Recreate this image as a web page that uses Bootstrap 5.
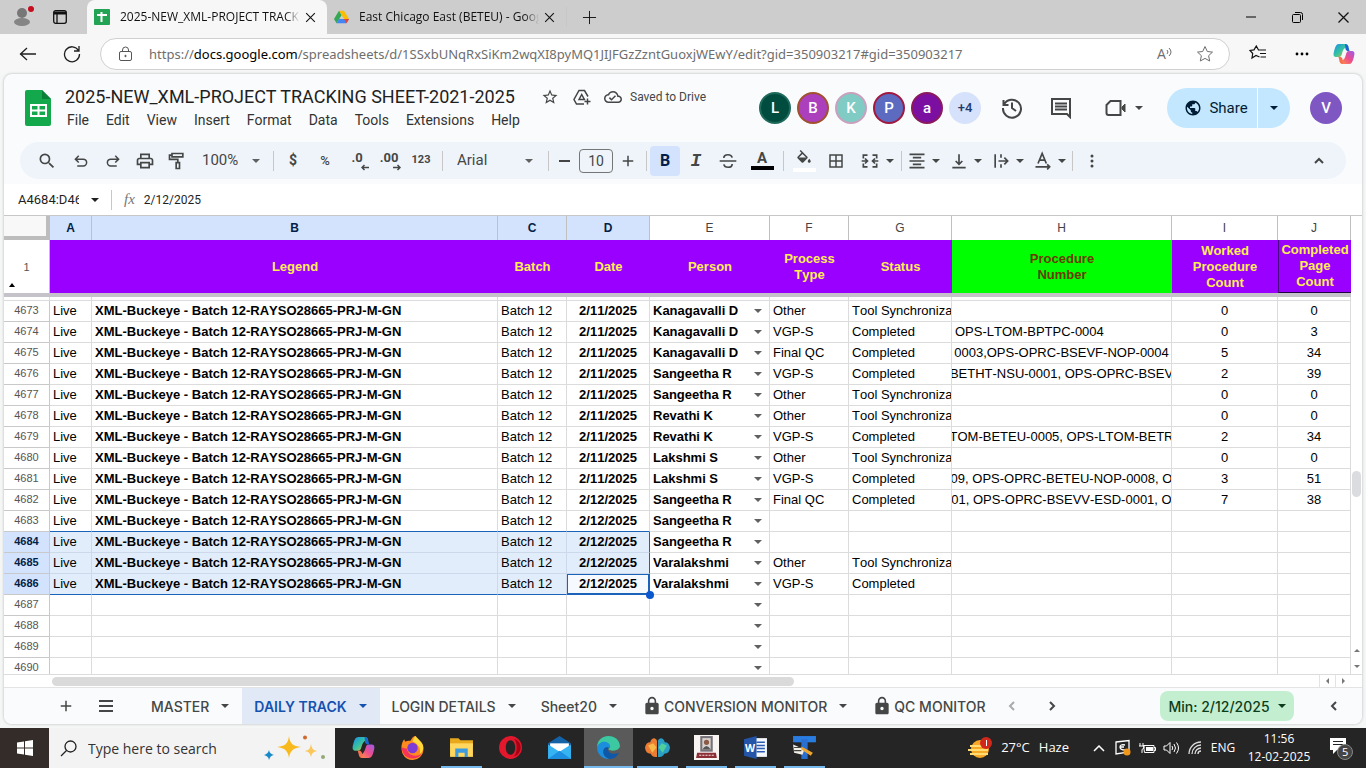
<!DOCTYPE html>
<html lang="en">
<head>
<meta charset="utf-8">
<meta name="viewport" content="width=device-width, initial-scale=1">
<title>2025-NEW_XML-PROJECT TRACKING SHEET-2021-2025</title>
<link href="https://cdn.jsdelivr.net/npm/bootstrap@5.3.0/dist/css/bootstrap.min.css" rel="stylesheet">
<style>
  :root { --ink: #444746; --sel: #d3e3fd; --blue: #1a63b8; --line: #dcdcdc; }
  body { font-family: Roboto, "Liberation Sans", sans-serif; background: #f5f6f6; color: #1f1f1f; }
  button, input, select { font-family: inherit; border: 0; background: transparent; padding: 0; color: inherit; }
  svg { display: block; flex: none; }
  .os-font { font-family: "Open Sans", "Noto Sans", sans-serif; }
  .ic { width: 20px; height: 20px; fill: currentColor; }
  .ic-18 { width: 18px; height: 18px; }
  .ic-line { fill: none; stroke: currentColor; stroke-width: 2; }
  .ic-thin { fill: none; stroke: currentColor; stroke-width: 1; }
  .ink { color: var(--ink); }
  .faint { color: #aaa; }
  .caret { width: 8px; height: 4px; fill: currentColor; }
  .tap { display: flex; align-items: center; justify-content: center; flex: none; }
  .w-30 { width: 30px; } .w-32 { width: 32px; } .w-38 { width: 38px; } .w-44 { width: 44px; } .w-46 { width: 46px; }

  /* browser tabs */
  .tabstrip { height: 34px; background: #cdcdcd; font-size: 12px; color: #111; }
  .edge-tab { width: 239px; padding: 0 10px 0 7px; gap: 10px; }
  .edge-tab.on { background: #f7f7f7; border-radius: 8px 8px 0 0; width: 240px; margin-left: 11px; }
  .edge-tab a { color: inherit; text-decoration: none; margin-right: -6px; -webkit-mask-image: linear-gradient(90deg, #000 92%, transparent); mask-image: linear-gradient(90deg, #000 92%, transparent); }
  .dot { width: 6px; height: 6px; background: #c50f1f; top: 6px; left: 28px; }

  /* address bar */
  .addr { height: 39px; background: #f7f7f7; }
  .omni { height: 32px; border: 1px solid #d0d0d0; border-radius: 16px; background: #fff; font-size: 14px; color: #6e6e6e; padding: 0 8px 0 17px; }
  .omni b { font-weight: 400; color: #000; }
  .url { font: 13px "Noto Sans", "Open Sans", sans-serif; }

  /* app frame */
  .frame { margin: 1px 4px 4px; background: #fafbfc; border-radius: 8px; box-shadow: 0 0 3px #b5b5b5; min-height: 0; }
  .frame > *, .tabstrip, .addr, .taskbar { flex-shrink: 0; }
  .apphead { height: 68px; padding: 0 20px 0 21px; }
  .logo { margin-right: 14px; }
  .doc-title { font-size: 18px; line-height: 24px; width: 457px; }
  .doc-title + button { margin-left: 12px; }
  .menu { gap: 17px; font-size: 14px; line-height: 22px; padding-left: 2px; }
  .menu a { color: #333; text-decoration: none; }
  .saved { font-size: 12px; color: var(--ink); margin-left: 6px; gap: 8px; }
  .who { width: 32px; height: 32px; border-radius: 50%; border: 2px solid transparent; color: #fff; font-size: 15px; font-weight: 500; display: flex; align-items: center; justify-content: center; flex: none; }
  .who-l { background: #004d40; border-color: #1f6a5c; }
  .who-b { background: #ab3fbc; border-color: #a0522d; }
  .who-k { background: #80cbc4; border-color: #c9a0bd; }
  .who-p { background: #5c6bc0; border-color: #a01840; }
  .who-a { background: #7b0fa2; border-color: #8a1a5a; }
  .who-more { background: #d6e2fb; border: 0; color: #1f3a6d; font-size: 13px; }
  .who-me { background: #7e57c2; border: 0; margin-left: 20px; }
  .people { gap: 6px; }
  .hist { width: 32px; margin-left: 15px; }
  .comm { width: 32px; margin-left: 17px; }
  .meet { gap: 9px; margin: 0 24px 0 28px; }
  .share { height: 40px; border-radius: 20px; background: #c2e7ff; color: #001d35; font-size: 15px; font-weight: 500; }
  .share button:first-child { width: 91px; gap: 7px; border-right: 1px solid #fff; }

  /* toolbar */
  .tools { height: 37px; margin: 0 16px 5px; padding: 0 11px; border-radius: 19px; background: #eff4fb; color: var(--ink); font-size: 14px; }
  .rule { width: 1px; height: 20px; background: #c7c7c7; flex: none; }
  .gap-l { margin-left: 2px; }
  .gap-m { margin-left: 3px; }
  .gap-x { margin-left: 5px; }
  .pick { appearance: none; -webkit-appearance: none; background: url("data:image/svg+xml,%3Csvg xmlns='http://www.w3.org/2000/svg' width='8' height='4'%3E%3Cpath d='M0 0h8L4 4z' fill='%23606060'/%3E%3C/svg%3E") no-repeat right 5px center; }
  .zoom-pick { width: 63px; margin: 0 8px 0 9px; font-size: 15px; }
  .font-pick { width: 81px; margin: 0 10px 0 14px; font-size: 15px; }
  .size-box { width: 34px; height: 24px; border: 1px solid #747775; border-radius: 4px; text-align: center; font-size: 14px; flex: none; }
  .bold-on { width: 30px; height: 30px; background: var(--sel); border-radius: 4px; color: #041e49; font-size: 16px; }
  .pct { font-size: 13px; font-weight: 500; }
  .dec { font-size: 13px; }
  .dec svg { align-self: flex-end; }
  .fmt123 { font-size: 11px; font-weight: 700; }
  .ital { font: italic bold 18px "Liberation Mono", monospace; }
  .tc { font-size: 15px; line-height: 15px; border-bottom: 4px solid #000; width: 23px; text-align: center; }
  .fc { border-bottom: 4px solid #fff; width: 23px; }
  .drop { width: 42px; gap: 5px; }
  .merge { width: 49px; gap: 6px; }

  /* formula bar */
  .fbar { height: 32px; background: #fff; border-bottom: 1px solid #c7c7c7; font-size: 13px; padding-left: 14px; }
  .name-box { width: 61px; }
  .cell-value { font-size: 12px; }
  .fx { font-family: "Liberation Serif", serif; font-style: italic; font-size: 15px; color: #777; }

  /* grid */
  .gridwrap { flex: 1 1 0; min-height: 0; background: #fff; overflow: hidden; }
  .sheet { table-layout: fixed; width: 100%; border-collapse: separate; border-spacing: 0; font: 13px/20px "Liberation Sans", sans-serif; font-kerning: none; color: #000; }
  .c-head { width: 46px; } .c-a { width: 42px; } .c-c { width: 69px; } .c-d { width: 83px; } .c-e { width: 120px; }
  .c-f { width: 79px; } .c-g { width: 103px; } .c-h { width: 220px; } .c-i { width: 106px; } .c-j { width: 73px; }
  .sheet th, .sheet td { padding: 0 3px; overflow: hidden; white-space: nowrap; border: 0 solid var(--line); border-width: 0 1px 1px 0; height: 21px; }
  .sheet .letters th { height: 24px; font-size: 12px; font-weight: 400; text-align: center; color: #444; border-color: #c0c0c0; border-bottom: 0; }
  .sheet .letters .on { background: var(--sel); color: #041e49; font-weight: 700; }
  .sheet .letters .corner { border: solid #bdbdbd; border-width: 0 4px 4px 0; background: #f8f8f8; }
  .sheet .rh { font-size: 11px; line-height: 18px; font-weight: 400; text-align: center; color: #555; border-color: #c9c9c9; vertical-align: top; }
  .sheet .rh.on { background: var(--sel); color: #041e49; font-weight: 700; }
  .sheet .frozen th { height: 53px; background: #9900ff; border: 0; color: #ffee50; font-weight: 700; line-height: 16px; text-align: center; vertical-align: middle; white-space: normal; padding: 0; }
  .sheet .frozen .rh { background: #fff; color: #555; font-weight: 400; border-right: 1px solid #c0c0c0; font-size: 11px; }
  .sheet .frozen .lime { background: #00ff00; color: #6b3a00; }
  .sheet .frozen .edge { border-left: 1px solid #4a0a80; border-bottom: 1px solid #200040; white-space: nowrap; }
  .pin { left: 5px; bottom: 6px; }
  .sheet .fbreak td { height: 4px; background: #c6c2c9; border: 0; line-height: 0; }
  .sheet .sliver td { height: 4px; line-height: 0; }
  .sheet .person { padding: 0; }
  .person select { display: block; width: 100%; height: 20px; font-weight: 700; padding-left: 3px; color: #000; background-position: right 7px center; }
  .sheet .in-sel { background: #e2edfb; border-color: #ccd9ea; }
  .sheet .s-above, .sheet .s-bottom { border-bottom-color: var(--blue); }
  .sheet .s-right { border-right-color: var(--blue); }
  .sheet .s-active { background: #f6faff; box-shadow: inset 0 0 0 1px var(--blue); border-color: var(--blue); overflow: visible; position: relative; }
  .handle { position: absolute; width: 8px; height: 8px; border-radius: 50%; background: #0b57d0; right: -5px; bottom: -5px; }
  .vbar { width: 11px; flex: none; background: #fff; color: #777; }
  .vbar .before { flex: 255; } .vbar .after { flex: 145; }
  .vbar .thumb { width: 9px; height: 26px; border-radius: 5px; background: #dadce0; }
  .vbar button { height: 16px; }
  .hbar { height: 14px; background: #fff; color: #777; border-top: 1px solid var(--line); border-bottom: 1px solid #e3e3e3; padding: 0 11px 0 48px; }
  .hbar .thumb { height: 9px; border-radius: 5px; background: #dadada; flex: 742; }
  .hbar .after { flex: 525; }
  .arrowbox { width: 16px; height: 12px; border-left: 1px solid #e3e3e3; }

  /* sheet tabs */
  .stabs { height: 36px; color: var(--ink); font: 500 14px Inter, Roboto, sans-serif; background: #f9fbfd; border-radius: 0 0 8px 8px; }
  .addsheet { margin-left: 40px; }
  .stabs-list { width: 850px; overflow: hidden; margin-left: 17px; flex: none; }
  .stab { height: 36px; padding: 0 13px 0 12px; display: flex; align-items: center; gap: 12px; color: inherit; white-space: nowrap; font-weight: 500; flex: none; }
  .stab.on { background: #e1e9f7; color: #1552b0; font-weight: 600; }
  .stab span { gap: 2px; }
  .min-pill { width: 134px; height: 30px; border-radius: 8px; background: #c4eed0; color: #0b3d1c; font-weight: 500; }
  .sidebtn { width: 68px; padding-left: 10px; }

  /* taskbar */
  .taskbar { height: 40px; background: #262526; color: #fff; font-size: 12px; padding-right: 3px; }
  .start { width: 49px; height: 40px; background: #342c29; }
  .tsearch { width: 286px; height: 40px; background: #f3f3f3; color: #333; padding: 0 8px 0 11px; gap: 11px; margin-right: 4px; }
  .tsearch input { font-size: 14px; color: #333; }
  .tsearch input::placeholder { color: #333; opacity: 1; }
  .app { width: 49px; height: 40px; border-bottom: 2px solid transparent; }
  .app.run { border-image: linear-gradient(90deg, transparent 10%, #76b9ed 10% 90%, transparent 90%) 1; }
  .app.act { background: #5a5a5a; border-bottom-color: #76b9ed; }
  .app svg { width: 25px; height: 25px; }
  .weather { font-size: 13px; gap: 9px; margin-right: 18px; }
  .tray { width: 24px; height: 40px; }
  .lang { width: 32px; }
  .clock { line-height: 18px; width: 80px; text-align: center; }
</style>
</head>
<body class="vh-100 d-flex flex-column overflow-hidden">

<svg width="0" height="0" class="position-absolute" aria-hidden="true">
  <symbol id="caret" viewBox="0 0 8 4"><path d="M0 0h8L4 4z"/></symbol>
  <symbol id="x" viewBox="0 0 12 12"><path d="M2 2l8 8M10 2l-8 8"/></symbol>
  <symbol id="plus" viewBox="0 0 16 16"><path d="M8 1v14M1 8h14"/></symbol>
  <symbol id="star" viewBox="0 0 24 24"><path d="M22 9.240l-7.190-.620L12 2 9.190 8.630 2 9.240l5.460 4.730L5.820 21 12 17.270 18.180 21l-1.630-7.030L22 9.240zM12 15.400l-3.760 2.270 1-4.280-3.320-2.880 4.380-.380L12 6.100l1.710 4.040 4.380.380-3.320 2.880 1 4.280L12 15.400z"/></symbol>
  <symbol id="thinstar" viewBox="0 0 18 18"><path d="M9 1.500l2.300 5 5.200.6-3.900 3.600 1.100 5.300L9 13.400 4.300 16l1.100-5.300L1.500 7.100l5.200-.6z"/></symbol>
  <symbol id="lock" viewBox="0 0 24 24"><path d="M18 8h-1V6c0-2.760-2.240-5-5-5S7 3.240 7 6v2H6c-1.100 0-2 .9-2 2v10c0 1.100.9 2 2 2h12c1.100 0 2-.9 2-2V10c0-1.100-.9-2-2-2zm-6 9c-1.100 0-2-.9-2-2s.9-2 2-2 2 .9 2 2-.9 2-2 2zm3.100-9H8.900V6c0-1.710 1.390-3.100 3.100-3.100 1.710 0 3.100 1.390 3.100 3.100v2z"/></symbol>
  <linearGradient id="g1" x1="0" y1="0" x2="1" y2="1"><stop offset="0" stop-color="#1b8fe8"/><stop offset=".5" stop-color="#35c3a0"/><stop offset="1" stop-color="#ffb52e"/></linearGradient>
  <linearGradient id="g2" x1="1" y1="0" x2="0" y2="1"><stop offset="0" stop-color="#9a5bf0"/><stop offset=".5" stop-color="#ee4d8b"/><stop offset="1" stop-color="#ff9a3c"/></linearGradient>
  <symbol id="copilot" viewBox="0 0 24 24"><path d="M16.500 5c-.5-1.800-1.500-3-3.500-3H7C4.500 2 3.500 4 2.500 7.500 1.500 11 .5 15 4 15h3c2 0 2.500-1.500 3.200-4S12 5 16.500 5z" fill="url(#g1)"/><path d="M7.500 19c.5 1.800 1.500 3 3.500 3h6c2.500 0 3.500-2 4.500-5.500S23.500 9 20 9h-3c-2 0-2.500 1.500-3.200 4S12 19 7.500 19z" fill="url(#g2)"/><path d="M13 2c2 0 3 1 3.500 3l1 4H16c-1 0-2-.6-2.500-2z" fill="#1967d2"/><path d="M11 22c-2 0-3-1-3.500-3l-1-4H8c1 0 2 .6 2.500 2z" fill="#f7704d"/></symbol>
</svg>

<!-- browser tabs -->
<div class="tabstrip os-font d-flex align-items-stretch">
  <button class="tap w-44 position-relative" aria-label="Profile"><svg width="18" height="20" viewBox="0 0 18 20" fill="#777"><circle cx="9" cy="6" r="5"/><ellipse cx="9" cy="15" rx="8" ry="4" fill="#858585"/></svg><span class="dot rounded-circle position-absolute"></span></button>
  <button class="tap w-32" aria-label="Workspaces"><svg width="14" height="14" viewBox="0 0 14 14" fill="none" stroke="#111" stroke-width="1.300"><rect x=".7" y=".7" width="12.600" height="12.600" rx="2"/><path d="M1 3h12" stroke-width="3"/><path d="M4 4v9"/></svg></button>
  <div class="edge-tab on d-flex align-items-center"><svg width="16" height="16" viewBox="0 0 16 16"><rect width="16" height="16" rx="1" fill="#23a455"/><path d="M3 6h10M7.500 3v10" stroke="#fff" stroke-width="2"/></svg><a href="#" class="flex-fill overflow-hidden text-nowrap">2025-NEW_XML-PROJECT TRACK</a><button class="tap" aria-label="Close tab"><svg class="ic-thin" width="13" height="13"><use href="#x"/></svg></button></div>
  <div class="edge-tab d-flex align-items-center"><svg width="15" height="14" viewBox="0 0 24 22"><path d="M8 1h8l8 13h-8z" fill="#fbbc04"/><path d="M8 1l4 7-8 13-4-7z" fill="#34a853"/><path d="M4 21l4-7h16l-4 7z" fill="#4285f4"/><path d="M16 14h8l-4 7z" fill="#ea4335"/></svg><a href="#" class="flex-fill overflow-hidden text-nowrap">East Chicago East (BETEU) - Goog</a><button class="tap" aria-label="Close tab"><svg class="ic-thin" width="13" height="13"><use href="#x"/></svg></button></div>
  <span class="rule align-self-center"></span>
  <button class="tap w-44" aria-label="New tab"><svg class="ic-thin" width="15" height="15"><use href="#plus"/></svg></button>
  <span class="flex-fill"></span>
  <button class="tap w-46" aria-label="Minimize"><svg width="10" height="2"><path d="M0 1h10" stroke="#000"/></svg></button>
  <button class="tap w-46" aria-label="Restore"><svg width="11" height="11" fill="none" stroke="#000"><rect x=".5" y="2.500" width="8" height="8" rx="1"/><path d="M3 .5h5.500a2 2 0 0 1 2 2V8"/></svg></button>
  <button class="tap w-46" aria-label="Close"><svg class="ic-thin" width="15" height="15"><use href="#x"/></svg></button>
</div>

<!-- address bar -->
<div class="addr os-font d-flex align-items-center">
  <button class="tap w-44 ms-1 ps-1" aria-label="Back"><svg class="ic-thin" width="18" height="14"><path d="M17 7H1M8 1L1.500 7 8 13" stroke-width="1.300"/></svg></button>
  <button class="tap w-44 me-2 ps-1" aria-label="Refresh"><svg class="ic-thin" width="18" height="18"><path d="M15.500 5.500A7.500 7.500 0 1 0 16.500 9M16 1v5h-5" stroke-width="1.300"/></svg></button>
  <div class="omni d-flex align-items-center flex-fill">
    <svg width="15" height="16" viewBox="0 0 15 16" fill="none" stroke="#555"><rect x="1.500" y="5.500" width="12" height="9" rx="1.500"/><path d="M4.500 5V4a3 3 0 0 1 6 0v1"/><circle cx="7.500" cy="10" r=".7" fill="#555"/></svg>
    <div class="url flex-fill ms-3 overflow-hidden text-nowrap" role="textbox" contenteditable="true" spellcheck="false" aria-label="Address">https://<b>docs.google.com</b>/spreadsheets/d/1SSxbUNqRxSiKm2wqXI8pyMQ1JIJFGzZzntGuoxjWEwY/edit?gid=350903217#gid=350903217</div>
    <button class="tap w-32" aria-label="Read aloud">A<svg class="ic-thin" width="7" height="12"><path d="M1 2q2 2 0 4M3 0q4 4 0 8"/></svg></button>
    <button class="tap w-32 ms-2" aria-label="Add favourite"><svg class="ic-thin ic-18"><use href="#thinstar"/></svg></button>
  </div>
  <button class="tap w-44 ms-1 ps-1" aria-label="Favourites"><svg width="18" height="17" viewBox="0 0 18 17" fill="none" stroke="#111" stroke-width="1.200"><path d="M10.500 12L7 10.500 3 13l.7-4.500L1 5.500l4-.6L7.300 1l2.200 4H17M11 8.500h6M11.500 12H17"/></svg></button>
  <button class="tap w-44 ps-1" aria-label="Menu"><svg width="14" height="4"><circle cx="2" cy="2" r="1.400"/><circle cx="7" cy="2" r="1.400"/><circle cx="12" cy="2" r="1.400"/></svg></button>
  <button class="tap w-44" aria-label="Copilot"><svg width="24" height="24"><use href="#copilot"/></svg></button>
</div>

<main class="frame d-flex flex-column flex-fill">
  <!-- document header -->
  <header class="apphead d-flex align-items-center">
    <a href="#" class="logo" aria-label="Sheets home"><svg width="26" height="36" viewBox="0 0 26 36"><path d="M2 0h15l9 9v25a2 2 0 0 1-2 2H2a2 2 0 0 1-2-2V2a2 2 0 0 1 2-2z" fill="#12a84b"/><path d="M17 0l9 9h-9z" fill="#0b8038"/><path d="M6 15h15v11H6zM6 20.500h15M13.500 15v11" fill="none" stroke="#fff" stroke-width="2"/></svg></a>
    <div>
      <div class="d-flex align-items-center">
        <h1 class="doc-title m-0 fw-normal text-nowrap">2025-NEW_XML-PROJECT TRACKING SHEET-2021-2025</h1>
        <button class="tap w-32 ink" aria-label="Star"><svg class="ic ic-18"><use href="#star"/></svg></button>
        <button class="tap w-32" aria-label="Move"><svg width="18" height="17" viewBox="0 0 18 17" fill="none" stroke="#444" stroke-width="1.500"><path d="M11 15H3.500L1 10.500 6 1.500h5.500l3.500 6M6 10.500l2.700-5 2.700 5zM14.500 9.500v6M11.500 12.500h6"/></svg></button>
        <button class="tap saved" aria-label="Saved to Drive"><svg class="ic ic-18" viewBox="0 0 24 24"><path d="M19.350 10.040C18.670 6.590 15.640 4 12 4 9.110 4 6.600 5.640 5.350 8.040 2.340 8.360 0 10.910 0 14c0 3.310 2.690 6 6 6h13c2.760 0 5-2.240 5-5 0-2.640-2.050-4.780-4.650-4.960zM19 18H6c-2.210 0-4-1.790-4-4 0-2.050 1.530-3.760 3.560-3.970l1.070-.110.5-.950C8.080 7.140 9.940 6 12 6c2.620 0 4.880 1.860 5.390 4.430l.3 1.500 1.530.110c1.560.1 2.780 1.410 2.780 2.960 0 1.650-1.350 3-3 3zm-9-3.820l-2.090-2.090L6.500 13.500 10 17l6.010-6.010-1.410-1.410z"/></svg>Saved to Drive</button>
      </div>
      <nav class="menu d-flex"><a href="#">File</a><a href="#">Edit</a><a href="#">View</a><a href="#">Insert</a><a href="#">Format</a><a href="#">Data</a><a href="#">Tools</a><a href="#">Extensions</a><a href="#">Help</a></nav>
    </div>
    <div class="people d-flex align-items-center ms-auto">
      <span class="who who-l">L</span><span class="who who-b">B</span><span class="who who-k">K</span><span class="who who-p">P</span><span class="who who-a">a</span><span class="who who-more">+4</span>
    </div>
    <button class="tap hist ink" aria-label="Version history"><svg class="ic-line" width="22" height="22" viewBox="0 0 22 22"><path d="M2.500 3v5h5M3 7.500A9 9 0 1 1 2 11M11 5.500V11l4 3"/></svg></button>
    <button class="tap comm ink" aria-label="Comments"><svg class="ic-line" width="22" height="22" viewBox="0 0 22 22"><path d="M2 2h18v18l-3-3H2zM5 6.500h12M5 9.500h12M5 12.500h12"/></svg></button>
    <button class="tap meet ink" aria-label="Meet"><svg width="21" height="18" viewBox="0 0 21 18" class="ic-line"><path d="M1.500 6l4-4h10v14h-12a2 2 0 0 1-2-2z"/><path d="M17 8l3-3v8l-3-3z" fill="#444" stroke-width="1"/></svg><svg class="caret"><use href="#caret"/></svg></button>
    <div class="share d-flex">
      <button class="tap ps-2"><svg class="ic ic-18" viewBox="0 0 24 24"><path d="M12 2C6.480 2 2 6.480 2 12s4.480 10 10 10 10-4.480 10-10S17.520 2 12 2zm-1 17.930c-3.950-.490-7-3.850-7-7.930 0-.620.080-1.210.210-1.790L9 15v1c0 1.100.9 2 2 2v1.930zm6.900-2.540c-.260-.810-1-1.390-1.900-1.390h-1v-3c0-.550-.450-1-1-1H8v-2h2c.550 0 1-.450 1-1V7h2c1.100 0 2-.9 2-2v-.410c2.930 1.190 5 4.060 5 7.410 0 2.080-.8 3.970-2.100 5.390z"/></svg>Share</button>
      <button class="tap w-32" aria-label="Share options"><svg class="caret"><use href="#caret"/></svg></button>
    </div>
    <span class="who who-me">V</span>
  </header>

  <!-- toolbar -->
  <div class="tools d-flex align-items-center" role="toolbar">
    <button class="tap w-32" aria-label="Search"><svg class="ic" viewBox="0 0 24 24"><path d="M15.500 14h-.790l-.280-.270A6.471 6.471 0 0 0 16 9.500 6.500 6.500 0 1 0 9.500 16c1.610 0 3.090-.590 4.230-1.570l.270.280v.790l5 4.990L20.490 19l-4.990-5zm-6 0C7.010 14 5 11.990 5 9.500S7.010 5 9.500 5 14 7.010 14 9.500 11.990 14 9.500 14z"/></svg></button>
    <button class="tap w-32 gap-l" aria-label="Undo"><svg class="ic-18 ic-line" viewBox="0 0 24 24"><path d="M9 5L4.500 9.500 9 14M5 9.500h10a4.500 4.500 0 0 1 0 9H7"/></svg></button>
    <button class="tap w-32" aria-label="Redo"><svg class="ic-18 ic-line" viewBox="0 0 24 24"><path d="M15 5l4.500 4.500L15 14M19 9.500H9a4.500 4.500 0 0 0 0 9h8"/></svg></button>
    <button class="tap w-32" aria-label="Print"><svg class="ic" viewBox="0 0 24 24"><path d="M19 8h-1V3H6v5H5c-1.660 0-3 1.340-3 3v6h4v4h12v-4h4v-6c0-1.660-1.340-3-3-3zM8 5h8v3H8V5zm8 12v2H8v-4h8v2zm2-2v-2H6v2H4v-4c0-.550.450-1 1-1h14c.550 0 1 .450 1 1v4h-2z"/></svg></button>
    <button class="tap w-32" aria-label="Paint format"><svg class="ic ic-line" viewBox="0 0 24 24"><path d="M6 3h13v4H6zM6 5H3v5h10v4M11 14h4v7h-4z"/></svg></button>
    <select class="pick zoom-pick" aria-label="Zoom"><option>100%</option></select><span class="rule"></span>
    <button class="tap w-32 gap-m fw-bold">$</button>
    <button class="tap w-32 pct">%</button>
    <button class="tap w-32 dec flex-column" aria-label="Decrease decimals"><span class="fw-bold lh-1">.0</span><svg class="ic-line me-1" width="8" height="7" viewBox="0 0 8 7"><path d="M8 3.500H1M3.500 1L1 3.500 3.500 6" stroke-width="1.500"/></svg></button>
    <button class="tap w-32 dec flex-column" aria-label="Increase decimals"><span class="fw-bold lh-1">.00</span><svg class="ic-line me-1" width="8" height="7" viewBox="0 0 8 7"><path d="M0 3.500h7M4.500 1L7 3.500 4.500 6" stroke-width="1.500"/></svg></button>
    <button class="tap w-32 fmt123">123</button><span class="rule gap-x"></span>
    <select class="pick font-pick" aria-label="Font"><option>Arial</option></select><span class="rule"></span>
    <button class="tap w-30" aria-label="Smaller"><svg width="11" height="2"><path d="M0 1h11" stroke="#444" stroke-width="2"/></svg></button>
    <input class="size-box" value="10" aria-label="Font size">
    <button class="tap w-30" aria-label="Larger"><svg class="ic-line" width="12" height="12" viewBox="0 0 16 16"><use href="#plus"/></svg></button><span class="rule gap-m"></span>
    <button class="tap bold-on fw-bold gap-m">B</button>
    <button class="tap w-32 ital">I</button>
    <button class="tap w-32" aria-label="Strikethrough"><svg class="ic ic-line" viewBox="0 0 24 24"><path d="M2 12h20M17 8c-.5-2.500-2.500-3.500-5-3.500S7 5.700 7 8.500M7 16c.5 2.500 2.500 3.500 5 3.500s5-1.200 5-4"/></svg></button>
    <button class="tap w-32 gap-l" aria-label="Text color"><span class="tc fw-bold">A</span></button><span class="rule gap-x"></span>
    <button class="tap w-32 ms-1" aria-label="Fill color"><span class="fc tap"><svg class="ic ic-18" viewBox="0 0 24 24"><path d="M16.560 8.940L7.620 0 6.210 1.410l2.380 2.380-5.150 5.150c-.590.590-.590 1.540 0 2.120l5.500 5.500c.290.290.680.440 1.060.440s.770-.150 1.060-.440l5.500-5.500c.590-.580.590-1.530 0-2.120zM5.210 10L10 5.210 14.790 10H5.210zM19 11.500s-2 2.170-2 3.500c0 1.100.9 2 2 2s2-.9 2-2c0-1.330-2-3.500-2-3.500z"/></svg></span></button>
    <button class="tap w-32" aria-label="Borders"><svg class="ic ic-18" viewBox="0 0 24 24"><path d="M3 3v18h18V3H3zm8 16H5v-6h6v6zm0-8H5V5h6v6zm8 8h-6v-6h6v6zm0-8h-6V5h6v6z"/></svg></button>
    <button class="tap drop merge" aria-label="Merge cells"><svg class="ic ic-line" viewBox="0 0 24 24"><path d="M9 5H4v4M15 5h5v4M9 19H4v-4M15 19h5v-4M2 12h6M6 9l3 3-3 3M22 12h-6M18 9l-3 3 3 3"/></svg><svg class="caret"><use href="#caret"/></svg></button><span class="rule"></span>
    <button class="tap drop" aria-label="Horizontal align"><svg class="ic" viewBox="0 0 24 24"><path d="M7 15v2h10v-2H7zm-4 6h18v-2H3v2zm0-8h18v-2H3v2zm4-6v2h10V7H7zM3 3v2h18V3H3z"/></svg><svg class="caret"><use href="#caret"/></svg></button>
    <button class="tap drop" aria-label="Vertical align"><svg class="ic ic-line" viewBox="0 0 24 24"><path d="M12 4v12M8 12l4 4 4-4M4 20h16"/></svg><svg class="caret"><use href="#caret"/></svg></button>
    <button class="tap drop" aria-label="Text wrapping"><svg class="ic ic-line" viewBox="0 0 24 24"><path d="M5 4v16M12 4v4M12 16v4M9 12h11M16 8l4 4-4 4"/></svg><svg class="caret"><use href="#caret"/></svg></button>
    <button class="tap drop" aria-label="Text rotation"><svg class="ic ic-line" viewBox="0 0 24 24"><path d="M6 15L11 3l5 12M8 11h6M3 19h17M17 16l3 3-3 3"/></svg><svg class="caret"><use href="#caret"/></svg></button>
    <span class="rule gap-l"></span>
    <button class="tap w-38" aria-label="More"><svg width="4" height="14" viewBox="0 0 4 14" fill="#444"><circle cx="2" cy="2" r="1.500"/><circle cx="2" cy="7" r="1.500"/><circle cx="2" cy="12" r="1.500"/></svg></button>
    <button class="tap w-32 ms-auto" aria-label="Hide menus"><svg class="ic-line" width="10" height="7"><path d="M1 6l4-4 4 4"/></svg></button>
  </div>

  <!-- formula bar -->
  <div class="fbar d-flex align-items-center">
    <input class="name-box" value="A4684:D4686" aria-label="Name box">
    <button class="tap ms-2 me-2 px-1" aria-label="Named ranges"><svg class="caret"><use href="#caret"/></svg></button>
    <span class="rule me-2"></span><label for="fx" class="fx px-1">fx</label>
    <input id="fx" class="cell-value flex-fill gap-x" value="2/12/2025">
  </div>

  <!-- cells -->
  <div class="gridwrap d-flex">
    <div class="flex-fill overflow-hidden">
      <table class="sheet">
        <colgroup><col class="c-head"><col class="c-a"><col><col class="c-c"><col class="c-d"><col class="c-e"><col class="c-f"><col class="c-g"><col class="c-h"><col class="c-i"><col class="c-j"></colgroup>
        <thead>
          <tr class="letters"><th class="corner"></th><th class="on">A</th><th class="on">B</th><th class="on">C</th><th class="on">D</th><th>E</th><th>F</th><th>G</th><th>H</th><th>I</th><th>J</th></tr>
          <tr class="frozen"><th class="rh position-relative">1<svg class="pin position-absolute" width="6" height="4"><path d="M0 4l3-4 3 4z"/></svg></th><th></th><th>Legend</th><th>Batch</th><th>Date</th><th>Person</th><th>Process<br>Type</th><th>Status</th><th class="lime">Procedure<br>Number</th><th>Worked<br>Procedure<br>Count</th><th class="edge">Completed<br>Page<br>Count</th></tr>
          <tr class="fbreak"><td colspan="11"></td></tr>
        </thead>
        <tbody id="cells"></tbody>
      </table>
    </div>
    <div class="vbar d-flex flex-column align-items-center">
      <span class="before"></span><span class="thumb"></span><span class="after"></span>
      <button class="tap" aria-label="Scroll up"><svg width="6" height="3" fill="#777"><path d="M0 3l3-3 3 3z"/></svg></button>
      <button class="tap" aria-label="Scroll down"><svg width="6" height="3" fill="#777"><path d="M0 0h6L3 3z"/></svg></button>
    </div>
  </div>
  <div class="hbar d-flex align-items-center">
    <span class="thumb"></span><span class="after"></span>
    <button class="arrowbox tap" aria-label="Scroll left"><svg width="3" height="6" fill="#777"><path d="M3 0v6L0 3z"/></svg></button>
    <button class="arrowbox tap" aria-label="Scroll right"><svg width="3" height="6" fill="#777"><path d="M0 0v6l3-3z"/></svg></button>
  </div>

  <!-- sheet tabs -->
  <div class="stabs d-flex align-items-center">
    <button class="tap w-44 addsheet" aria-label="Add sheet"><svg class="ic-line" width="12" height="12" viewBox="0 0 16 16"><use href="#plus"/></svg></button>
    <button class="tap w-32 gap-l" aria-label="All sheets"><svg class="ic-line" width="14" height="12"><path d="M0 1h14M0 6h14M0 11h14"/></svg></button>
    <div class="stabs-list d-flex">
      <button class="stab">MASTER<svg class="caret"><use href="#caret"/></svg></button>
      <button class="stab on">DAILY TRACK<svg class="caret"><use href="#caret"/></svg></button>
      <button class="stab">LOGIN DETAILS<svg class="caret"><use href="#caret"/></svg></button>
      <button class="stab">Sheet20<svg class="caret"><use href="#caret"/></svg></button>
      <button class="stab"><span class="d-flex align-items-center"><svg class="ic"><use href="#lock"/></svg>CONVERSION MONITOR</span><svg class="caret"><use href="#caret"/></svg></button>
      <button class="stab"><span class="d-flex align-items-center"><svg class="ic"><use href="#lock"/></svg>QC MONITOR</span></button>
    </div>
    <button class="tap w-44 faint" aria-label="Scroll tabs left"><svg class="ic-line" width="7" height="10"><path d="M6 1L2 5l4 4"/></svg></button>
    <button class="tap w-38" aria-label="Scroll tabs right"><svg class="ic-line" width="7" height="10"><path d="M1 1l4 4-4 4"/></svg></button>
    <button class="tap min-pill ms-auto gap-2">Min: 2/12/2025<svg class="caret"><use href="#caret"/></svg></button>
    <button class="tap sidebtn" aria-label="Show side panel"><svg class="ic-line" width="7" height="10"><path d="M6 1L2 5l4 4"/></svg></button>
  </div>
</main>

<!-- taskbar -->
<footer class="taskbar os-font d-flex align-items-center">
  <button class="tap start" aria-label="Start"><svg width="16" height="16" fill="#fff"><path d="M0 2.500l7-1v6H0zM8 1.300L16 0v7.500H8zM0 8.500h7v6l-7-1zM8 8.500h8V16l-8-1.300z"/></svg></button>
  <div class="tsearch d-flex align-items-center">
    <svg width="17" height="17" fill="none" stroke="#222" stroke-width="1.300"><circle cx="10.500" cy="6.500" r="5.500"/><path d="M6.500 10.500L1 16"/></svg>
    <input class="flex-fill w-50" placeholder="Type here to search" aria-label="Type here to search">
    <svg width="64" height="26" viewBox="0 0 64 26"><path d="M26 1c1 8 4 10 12 11-8 1-11 4-12 11-1-7-4-10-12-11 8-1 11-3 12-11z" fill="#f8b91d"/><path d="M48 9c1 5 2 6 6 7-4 1-5 2-6 6-1-4-2-5-6-6 4-1 5-2 6-7z" fill="#fbc65a"/><path d="M6 15c.5 3 2 4 5 5-3 .5-4 2-5 5-.5-3-2-4-5-5 3-1 4-2 5-5z" fill="#1789c9"/><circle cx="42" cy="2.500" r="2" fill="#d1682c"/><circle cx="60" cy="22" r="2" fill="#93a97a"/></svg>
  </div>
  <button class="tap app" aria-label="Copilot"><svg><use href="#copilot"/></svg></button>
  <button class="tap app" aria-label="Firefox"><svg viewBox="0 0 24 24"><path d="M12 2.500c2-2 3-1.500 3-1.500s0 2 3 4 5 5 4.500 9A10.500 10.500 0 0 1 1.500 13C1 8 4 4 4 4l1 2.500c2-1.500 5-1 5-1z" fill="#ff8a1e"/><path d="M15 1c1 2 6 5 7 9s-1 7-3 8c1-5-1-9-7-12 .5-2 1.500-3.500 3-5z" fill="#ffd83b"/><path d="M1.500 12c1 7 5 10.500 11 10.500 4 0 7-2 8.500-4.500-5 3-13 3-14.500-5-2 0-4-1-5-1z" fill="#f5335b"/><circle cx="12" cy="12.500" r="5" fill="#7e3bd6"/></svg></button>
  <button class="tap app run" aria-label="File Explorer"><svg viewBox="0 0 24 24"><path d="M1 3h8l2 2h12v6H1z" fill="#e8a91c"/><path d="M1 8h22v13H1z" fill="#ffd75e"/><path d="M6 21v-8h12v8h-3v-4H9v4z" fill="#3a9be0"/></svg></button>
  <button class="tap app" aria-label="Opera"><svg viewBox="0 0 24 24"><path fill-rule="evenodd" d="M12 1a11 11 0 1 0 0 22 11 11 0 0 0 0-22zm0 4c2.700 0 4.500 3 4.500 7s-1.800 7-4.500 7-4.500-3-4.500-7S9.300 5 12 5z" fill="#e3182d"/><path d="M15 3.500c4 2 4 15 0 17 9-2 9-15 0-17z" fill="#a70014"/></svg></button>
  <button class="tap app" aria-label="Mail"><svg viewBox="0 0 24 24"><path d="M1 8l11-7 11 7v14H1z" fill="#1462a8"/><path d="M3 8h18v8H3z" fill="#fff"/><path d="M1 9l11 7 11-7v14H1z" fill="#36b3f2"/><path d="M1 23l11-8 11 8z" fill="#1d8fe0"/></svg></button>
  <button class="tap app act" aria-label="Edge"><svg viewBox="0 0 24 24"><path d="M12 1C5 1 1 6 1 12c2-5 7-6 10-4 2 1.500 2 4 1 6 3 2 10 1 11-3C23 5 18 1 12 1z" fill="#3cc8a0"/><path d="M1 12c2-6 8-7 11-4 2 2 2 4 1 5-2-2-6-1-6 3 0 3 3 6 7 7C7 24 1 19 1 12z" fill="#1b8ede"/><path d="M7 16c0-3 2-5 5-4-2 4 3 8 10 5-2 4-5 6-8 6s-7-3-7-7z" fill="#0f58a8"/></svg></button>
  <button class="tap app run" aria-label="Client"><svg viewBox="0 0 24 24"><path d="M0 12q1-5 5-5 1-4 4-4 3 1 2.500 4v14q-4 1-6-3-5 0-5.500-6z" fill="#ec7d32"/><path d="M24 12q-1-5-5-5-1-4-4-4-3 1-2.500 4v14q4 1 6-3 5 0 5.500-6z" fill="#2a9fc6"/><path d="M3 10l5-2 3 4-4 5z" fill="#f9b84a"/><path d="M21 10l-5-2-3 4 4 5z" fill="#4fcf9a"/></svg></button>
  <button class="tap app run" aria-label="Portal"><svg viewBox="0 0 24 24"><path d="M0 0h24v24H0z" fill="#f7f4f2"/><path d="M6 1h12v15H6z" fill="#77727a"/><path d="M8 3h8v11H8z" fill="#d9d2cf"/><circle cx="12" cy="7" r="2.500" fill="#8b5b48"/><path d="M8 14q4-7 8 0z" fill="#555"/><path d="M3 17h18l1 5H2z" fill="#8c2e35"/><path d="M5 19.500h14" stroke="#f2dede" stroke-dasharray="2 1"/></svg></button>
  <button class="tap app run" aria-label="Word"><svg viewBox="0 0 24 24"><path d="M9 3h14v18H9z" fill="#f4f7fc"/><path d="M13 7h8M13 10h8M13 13h8M13 16h8" stroke="#2b5cb3" stroke-width="1.500"/><path d="M1 4l12-3v22L1 20z" fill="#2455a8"/><text x="2" y="16" font-size="10" font-weight="700" fill="#fff">W</text></svg></button>
  <button class="tap app run" aria-label="Notes"><svg viewBox="0 0 24 24"><path d="M1 1h22v6H1z" fill="#2a7de0"/><path d="M9 4h6v19H9z" fill="#2a6fd0"/><path d="M1 9l11 5-2 5-8-2z" fill="#f2efe6"/><path d="M9 11l11 6-2 3-9-6z" fill="#f0a62c"/><path d="M2 12h6M2 15h7" stroke="#444"/></svg></button>

  <button class="tap weather ms-auto" aria-label="Weather"><svg width="24" height="22" viewBox="0 0 24 22"><circle cx="12" cy="12" r="9" fill="#f7a824"/><path d="M2 9h18M0 13h20M2 17h18" stroke="#ffdd75" stroke-width="2"/><circle cx="18" cy="6" r="6" fill="#d1281c"/><path d="M18.500 3v6" stroke="#fff"/></svg><span>27°C</span><span>Haze</span></button>
  <button class="tap tray" aria-label="Hidden icons"><svg class="ic-thin" width="12" height="7"><path d="M1 6l5-5 5 5" stroke-width="1.500"/></svg></button>
  <button class="tap tray" aria-label="Pen"><svg width="18" height="18" viewBox="0 0 18 18"><path d="M2 3l13-1.500V13L2 15zM11 6q-5-1-5 2t5 3M6 8h4" fill="none" stroke="#fff" stroke-width="1.300"/><circle cx="13" cy="13" r="3.500" fill="#f0971c"/></svg></button>
  <button class="tap tray" aria-label="Battery"><svg width="17" height="12" viewBox="0 0 17 12"><path d="M4.500 3.500H15v7H5.500zM15 5.500h1.500v3H15M1 1v3M4 1v3M0 4h5v2L3 7.500V11" fill="none" stroke="#fff"/><path d="M7 5h7v4H7z" fill="#fff"/></svg></button>
  <button class="tap tray" aria-label="Volume"><svg width="17" height="14" fill="none" stroke="#fff"><path d="M1 5h2.500L7 1.500v11L3.500 9H1zM9 5q1.500 2 0 4M11 3q3 4 0 8M13.500 1.500q4 5.500 0 11"/></svg></button>
  <button class="tap tray" aria-label="Network"><svg width="14" height="14" fill="none" stroke="#ddd"><path d="M1 13A12 12 0 0 1 13 1M4 13a9 9 0 0 1 9-9M7 13a6 6 0 0 1 6-6M10 13a3 3 0 0 1 3-3" stroke-width="1.300"/></svg></button>
  <button class="tap lang">ENG</button>
  <button class="clock">11:56<br>12-02-2025</button>
  <button class="tap w-44" aria-label="Notifications"><svg width="26" height="26" viewBox="0 0 26 26"><path d="M2 3h16v12H9l-4 4v-4H2z" fill="#fff"/><path d="M5 6.500h10M5 9.500h10" stroke="#222"/><circle cx="17" cy="17" r="7.500" fill="#444" stroke="#888"/><text x="14" y="21" font-size="11" fill="#fff">5</text></svg></button>
</footer>

<script src="https://cdn.jsdelivr.net/npm/bootstrap@5.3.0/dist/js/bootstrap.bundle.min.js"></script>
<script>
  // date, person, type, status, procedures, procedure count, page count
  const T = 'Tool Synchroniza', C = 'Completed';
  const rows = [
    ['2/11/2025', 'Kanagavalli D', 'Other', T, '', 0, 0],
    ['2/11/2025', 'Kanagavalli D', 'VGP-S', C, 'OPS-LTOM-BPTPC-0004', 0, 3],
    ['2/11/2025', 'Kanagavalli D', 'Final QC', C, '0003,OPS-OPRC-BSEVF-NOP-0004', 5, 34],
    ['2/11/2025', 'Sangeetha R', 'VGP-S', C, 'BETHT-NSU-0001, OPS-OPRC-BSEV', 2, 39],
    ['2/11/2025', 'Sangeetha R', 'Other', T, '', 0, 0],
    ['2/11/2025', 'Revathi K', 'Other', T, '', 0, 0],
    ['2/11/2025', 'Revathi K', 'VGP-S', C, 'TOM-BETEU-0005, OPS-LTOM-BETR', 2, 34],
    ['2/11/2025', 'Lakshmi S', 'Other', T, '', 0, 0],
    ['2/11/2025', 'Lakshmi S', 'VGP-S', C, '09, OPS-OPRC-BETEU-NOP-0008, O', 3, 51],
    ['2/12/2025', 'Sangeetha R', 'Final QC', C, '01, OPS-OPRC-BSEVV-ESD-0001, O', 7, 38],
    ['2/12/2025', 'Sangeetha R', '', '', '', '', ''],
    ['2/12/2025', 'Sangeetha R', '', '', '', '', ''],
    ['2/12/2025', 'Varalakshmi', 'Other', T, '', '', ''],
    ['2/12/2025', 'Varalakshmi', 'VGP-S', C, '', '', ''],
    null, null, null, null
  ];
  let html = '<tr class="sliver">' + '<td></td>'.repeat(11) + '</tr>';
  rows.forEach((r, i) => {
    const n = 4673 + i, sel = n >= 4684 && n <= 4686;
    const edge = n === 4683 ? ' s-above' : n === 4686 ? ' s-bottom' : '';
    const k = (sel ? 'in-sel' : '') + edge;
    const d = r || ['', '', '', '', '', '', ''];
    const procs = i === 1 ? d[4] : `<div class="d-flex justify-content-center">${d[4]}</div>`;
    html += `<tr><th class="rh${sel ? ' on' : ''}">${n}</th>
      <td class="${k}">${r ? 'Live' : ''}</td>
      <td class="fw-bold ${k}">${r ? 'XML-Buckeye - Batch 12-RAYSO28665-PRJ-M-GN' : ''}</td>
      <td class="${k}">${r ? 'Batch 12' : ''}</td>
      <td class="fw-bold text-center ${k}${sel ? ' s-right' : ''}${n === 4686 ? ' s-active' : ''}">${d[0]}${n === 4686 ? '<span class="handle"></span>' : ''}</td>
      <td class="person"><select class="pick" aria-label="Person, row ${n}"><option>${d[1]}</option></select></td>
      <td>${d[2]}</td><td>${d[3]}</td><td>${procs}</td>
      <td class="text-center">${d[5]}</td><td class="text-center">${d[6]}</td></tr>`;
  });
  document.getElementById('cells').innerHTML = html;
</script>
</body>
</html>
